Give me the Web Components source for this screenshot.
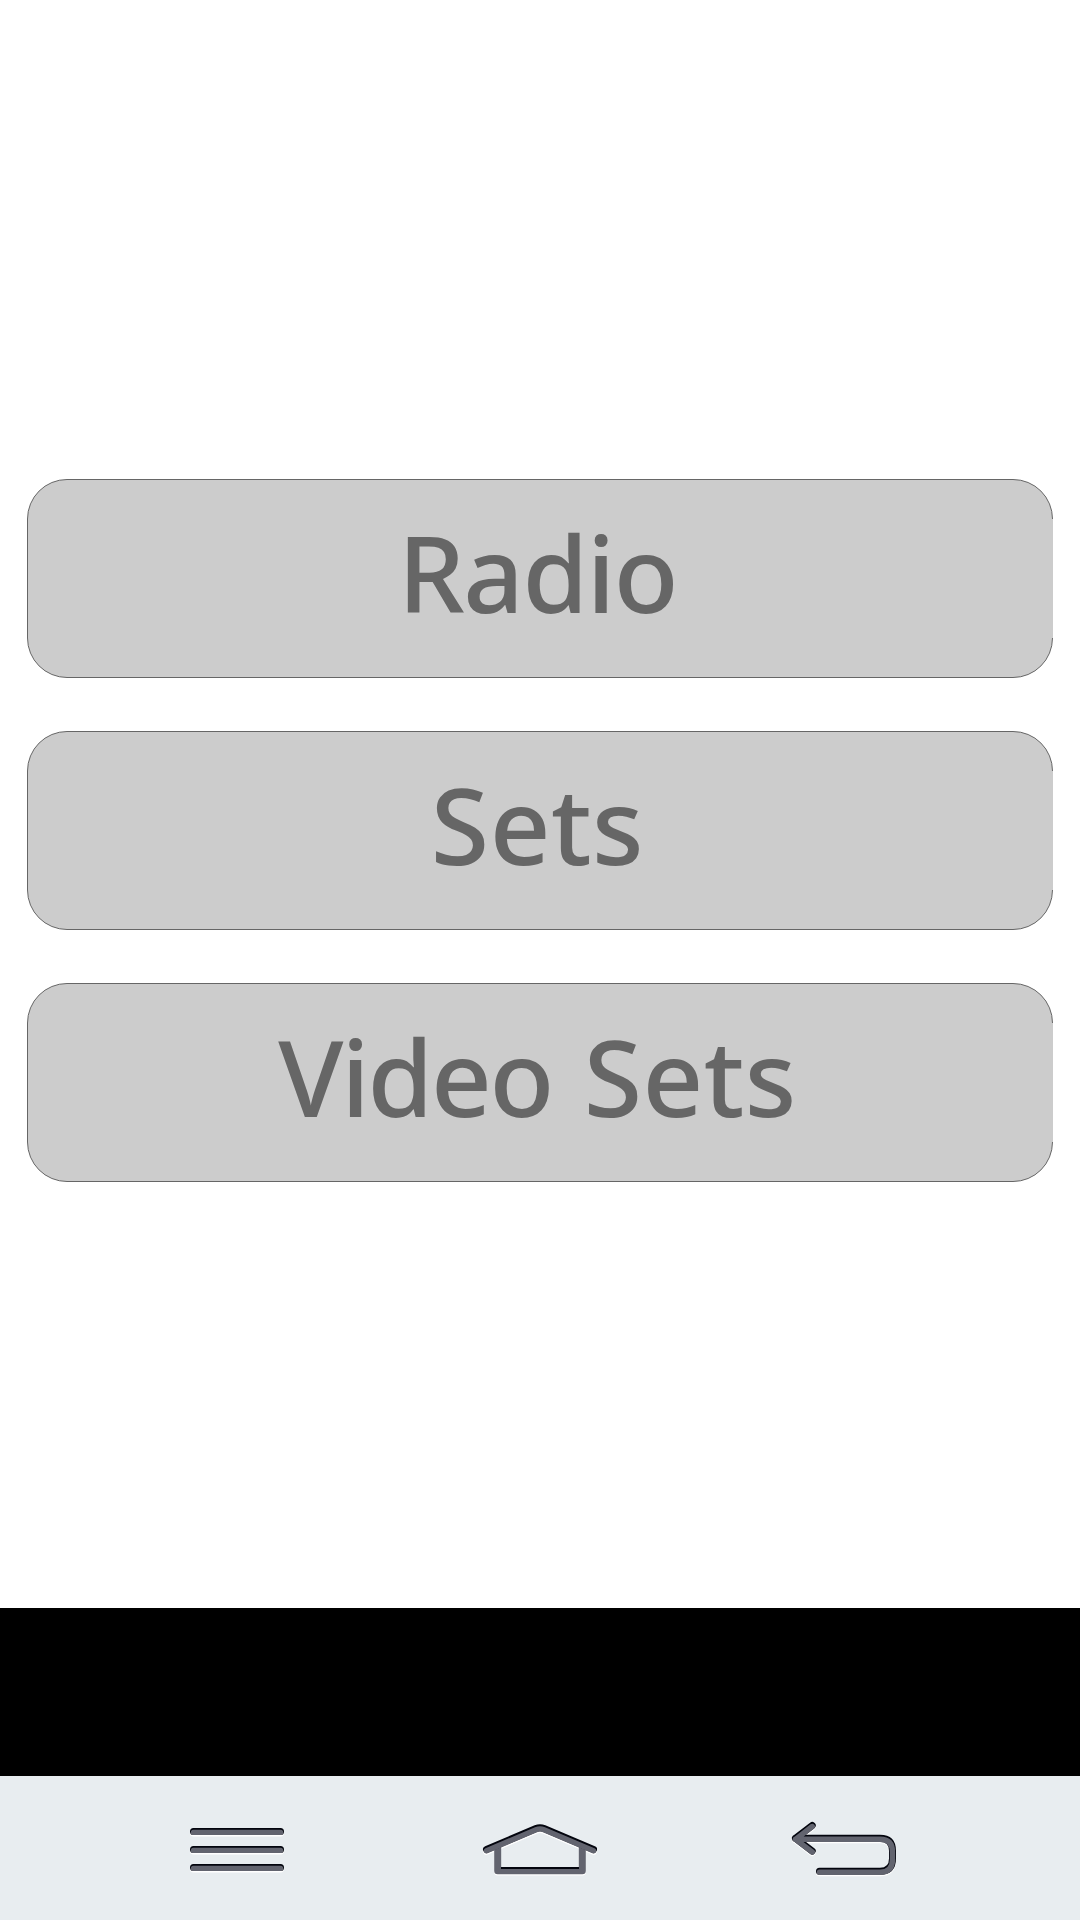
<!DOCTYPE html>
<html lang="en">
<head>
  <meta charset="UTF-8">
  <meta name="viewport" content="width=device-width, initial-scale=1.0">
  <title>Radio</title>
  <style>
    body { margin: 0; background: #fff; }
  </style>
</head>
<body>
  <app-screen>
    <menu-button style="--spacing: -1.5px">Radio</menu-button>
    <menu-button style="--spacing: 0.5px">Sets</menu-button>
    <menu-button style="--spacing: 0.4px; --gap: 4px"><span style="letter-spacing: -2.3px">Video</span> Sets</menu-button>
    <nav-bar slot="nav"></nav-bar>
  </app-screen>

  <template id="screen">
    <style>
      :host { display: flex; flex-direction: column; width: 1080px; height: 1920px; overflow: hidden; }
      main { display: flex; flex-direction: column; gap: 53px; height: 1608px; padding: 479px 27px 0; box-sizing: border-box; }
      .banner { height: 168px; background: #000; }
    </style>
    <main><slot></slot></main>
    <div class="banner"></div>
    <slot name="nav"></slot>
  </template>

  <template id="button">
    <style>
      :host { display: block; }
      button {
        display: flex; align-items: center; justify-content: center;
        position: relative; box-sizing: border-box; width: 100%; height: 199px;
        margin: 0; padding: 0 5px 13px 0; border: 1px solid #666; border-radius: 40px;
        background: #ccc; color: #666;
        font: 500 106px "Noto Sans", sans-serif; line-height: normal;
        letter-spacing: var(--spacing, 0); word-spacing: var(--gap, 0); white-space: pre;
      }
      /* the right edge has an outline only on its corners */
      button::after { content: ""; position: absolute; right: -1px; top: 39px; bottom: 39px; width: 1px; background: #ccc; }
    </style>
    <button><div><slot></slot></div></button>
  </template>

  <template id="nav">
    <style>
      :host { display: block; height: 144px; background: #e8edf0; }
      nav { display: grid; grid-template-columns: 100px 120px 110px; column-gap: 190px; padding: 39px 0 0 187px; }
      svg { display: block; height: 65px; fill: none; stroke-width: 7; stroke-linecap: round; stroke-linejoin: round; }
      .light { stroke: #fff; }
      .dark { stroke: #03050e; }
      .face { stroke: #62646f; stroke-width: 5.4; }
    </style>
    <nav>
      <svg width="100" viewBox="187 39 100 65">
        <defs><path id="m" d="M193.5 55.4H280.5M193.5 73.4H280.5M193.5 91.4H280.5"/></defs>
        <use href="#m" class="light" y="1.5"/>
        <use href="#m" class="dark"/>
        <use href="#m" class="face" y="1"/>
      </svg>
      <svg width="120" viewBox="477 39 120 65">
        <defs>
          <path id="roof" d="M486.5 73.5L536 52.5Q540 50.8 544 52.5L593.5 73.5"/>
          <path id="walls" d="M497.7 71V94.8H582.3V71"/>
        </defs>
        <use href="#walls" class="light" y="1.3"/>
        <use href="#roof" class="light" y="1.8"/>
        <use href="#walls" class="face" style="stroke-width:7"/>
        <path d="M501 92H579" class="dark" style="stroke-width:2;stroke-linecap:butt"/>
        <use href="#roof" class="dark"/>
        <use href="#roof" class="face" y="1.2"/>
      </svg>
      <svg width="110" viewBox="787 39 110 65">
        <defs><path id="b" d="M812.2 49.5L795.5 62.3L812.2 75M795.5 62.3H880Q892.5 62.3 892.5 75V82.5Q892.5 95.3 880 95.3H819.5"/></defs>
        <use href="#b" class="light" y="1.5"/>
        <use href="#b" class="dark"/>
        <use href="#b" class="face" y="1"/>
      </svg>
    </nav>
  </template>

  <script>
    function define(name, id) {
      customElements.define(name, class extends HTMLElement {
        connectedCallback() {
          this.attachShadow({mode : 'open'});
          this.shadowRoot.append(document.getElementById(id).content.cloneNode(true));
        }
      });
    }

    define('app-screen', 'screen');
    define('menu-button', 'button');
    define('nav-bar', 'nav');
  </script>
</body>
</html>
